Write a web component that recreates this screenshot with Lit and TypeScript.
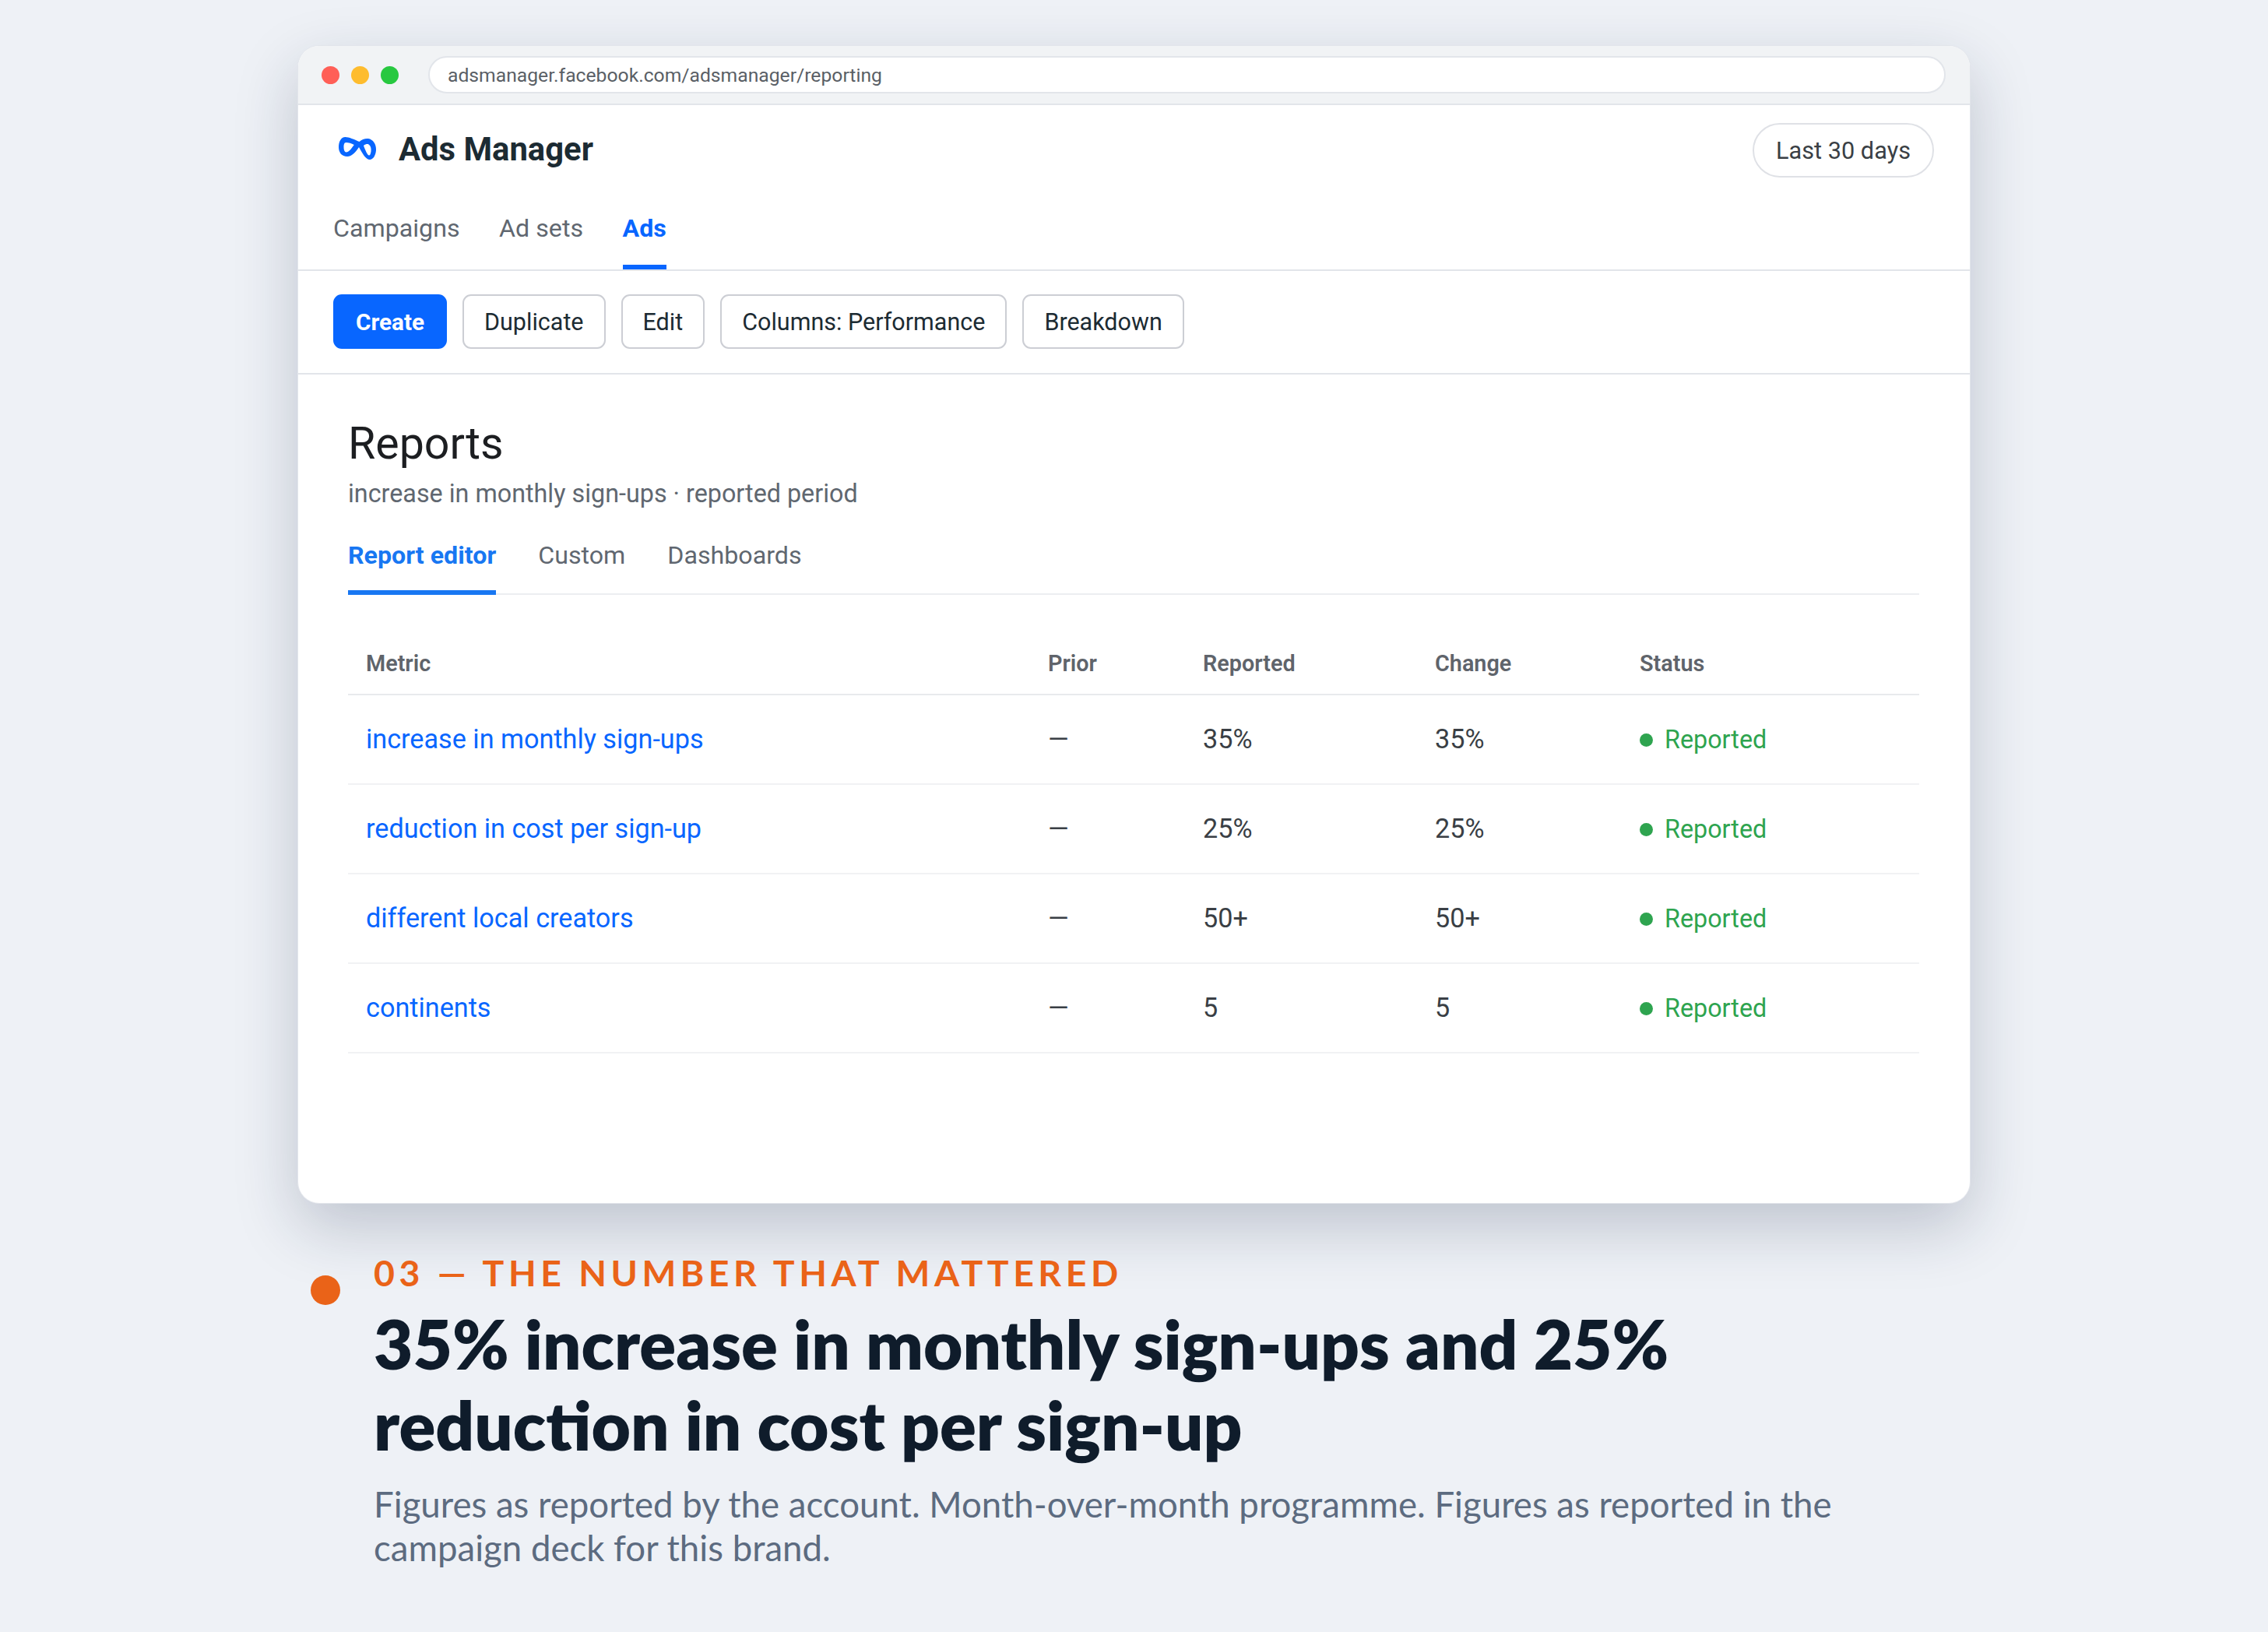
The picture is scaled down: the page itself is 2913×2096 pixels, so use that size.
import { LitElement, html, css } from 'lit';
import { customElement } from 'lit/decorators.js';

const rows = [
  { metric: 'increase in monthly sign-ups', reported: '35%', change: '35%' },
  { metric: 'reduction in cost per sign-up', reported: '25%', change: '25%' },
  { metric: 'different local creators', reported: '50+', change: '50+' },
  { metric: 'continents', reported: '5', change: '5' },
];

@customElement('app-root')
export class AppRoot extends LitElement {
  static styles = css`
    :host {
      display: block;
      min-height: 2096px;
      background: #eef1f6;
      font-family: Roboto, sans-serif;
      box-sizing: border-box;
      padding-top: 58px;
      overflow: hidden;
    }

    .window {
      box-sizing: border-box;
      width: 2149px;
      height: 1488px;
      margin-left: 382px;
      background: #fff;
      border-radius: 28px;
      border: 1px solid #e2e5eb;
      box-shadow: 0 30px 80px rgba(24, 36, 70, 0.22);
      overflow: hidden;
    }

    .chrome {
      box-sizing: border-box;
      height: 76px;
      display: flex;
      align-items: center;
      padding: 0 31px 0 30px;
      background: #f1f3f5;
      border-bottom: 2px solid #e2e5ea;
    }

    .dots {
      display: flex;
      gap: 15px;
      margin-right: 38px;
    }

    .dots span {
      width: 23px;
      height: 23px;
      border-radius: 50%;
    }

    .url {
      box-sizing: border-box;
      flex: 1;
      height: 48px;
      display: flex;
      align-items: center;
      padding: 0 23px;
      background: #fff;
      border: 2px solid #e2e5ea;
      border-radius: 24px;
      font-size: 24.7px;
      color: #5a5f66;
    }

    .head {
      box-sizing: border-box;
      height: 213px;
      border-bottom: 2px solid #e2e5ea;
    }

    .head-top {
      display: flex;
      justify-content: space-between;
      align-items: flex-start;
      padding: 23px 46px 0 52px;
    }

    .brand {
      display: flex;
      align-items: center;
      gap: 28px;
      height: 66px;
    }

    .brand svg {
      width: 49px;
      height: 30px;
      display: block;
    }

    .brand-name {
      font-size: 41.8px;
      font-weight: 700;
      color: #1c2b33;
    }

    .range {
      box-sizing: border-box;
      height: 70px;
      display: flex;
      align-items: center;
      padding: 0 28px;
      border: 2px solid #dfe1e6;
      border-radius: 35px;
      font-size: 30.7px;
      color: #3a3f45;
    }

    .tabs {
      display: flex;
      gap: 50.5px;
      padding-left: 45px;
      margin-top: 32px;
    }

    .tab {
      box-sizing: border-box;
      height: 86px;
      padding-top: 14px;
      font-size: 32.2px;
      color: #606770;
      border-bottom: 6px solid transparent;
    }

    .tab.on {
      color: #0866ff;
      font-weight: 700;
      border-bottom-color: #0866ff;
    }

    .toolbar {
      box-sizing: border-box;
      height: 133px;
      display: flex;
      gap: 20px;
      padding: 30px 45px 0;
      border-bottom: 2px solid #e2e5ea;
    }

    .btn {
      box-sizing: border-box;
      height: 70px;
      display: flex;
      align-items: center;
      padding: 0 26px;
      background: #fff;
      border: 2px solid #ccced4;
      border-radius: 11px;
      font-size: 30.5px;
      color: #1c2b33;
    }

    .btn.primary {
      padding: 0 27px;
      background: #0866ff;
      border-color: #0866ff;
      color: #fff;
      font-size: 29.7px;
      font-weight: 700;
    }

    .content {
      padding: 54px 65px 0 64px;
    }

    h1 {
      margin: 0;
      font-size: 57.3px;
      line-height: 70px;
      font-weight: 400;
      color: #1c1e21;
    }

    .sub {
      margin-top: 7px;
      font-size: 32.3px;
      line-height: 44px;
      color: #606770;
    }

    .subtabs {
      display: flex;
      gap: 54px;
      margin-top: 26px;
      border-bottom: 2px solid #eceef1;
    }

    .subtab {
      box-sizing: border-box;
      height: 82px;
      padding-top: 12px;
      margin-bottom: -2px;
      font-size: 32.2px;
      color: #606770;
    }

    .subtab.on {
      color: #1877f2;
      font-weight: 700;
      border-bottom: 6px solid #1877f2;
    }

    .table {
      margin-top: 39px;
    }

    .row {
      box-sizing: border-box;
      display: grid;
      grid-template-columns: 876px 199px 298px 263px 1fr;
      align-items: center;
      height: 115px;
      padding-bottom: 2px;
      border-bottom: 2px solid #f1f2f4;
      font-size: 34.2px;
      color: #3a3f45;
    }

    .row > div {
      padding-left: 23px;
    }

    .row.header {
      height: 90px;
      padding: 9px 0 0;
      font-size: 28.8px;
      font-weight: 600;
      color: #5f646b;
      border-bottom-color: #e8eaed;
    }

    .metric {
      color: #0866ff;
    }

    .status {
      display: flex;
      align-items: center;
      gap: 15px;
      padding-top: 3px;
      font-size: 32.3px;
      color: #2ea44f;
    }

    .status i {
      width: 17px;
      height: 17px;
      border-radius: 50%;
      background: #2ea44f;
    }

    .caption {
      display: flex;
      margin: 60px 0 0 399px;
      width: 2020px;
      font-family: Lato, sans-serif;
    }

    .mark {
      flex: none;
      width: 38px;
      height: 38px;
      margin-top: 32px;
      margin-right: 43px;
      border-radius: 50%;
      background: #ea6318;
    }

    .eyebrow {
      font-size: 46.4px;
      line-height: 56px;
      font-weight: 700;
      letter-spacing: 0.119em;
      color: #ea6318;
    }

    h2 {
      margin: 12px 0 0;
      font-size: 87px;
      line-height: 104px;
      font-weight: 800;
      color: #0f1c2b;
    }

    .note {
      margin-top: 22px;
      font-size: 45.6px;
      line-height: 56px;
      color: #5c6b80;
    }
  `;

  render() {
    return html`
      <div class="window">
        <div class="chrome">
          <div class="dots">
            <span style="background:#ff5f57"></span>
            <span style="background:#febc2e"></span>
            <span style="background:#28c840"></span>
          </div>
          <div class="url">adsmanager.facebook.com/adsmanager/reporting</div>
        </div>
        <div class="head">
          <div class="head-top">
            <div class="brand">
              <svg viewBox="0 0 49 30" fill="#0866ff" fill-rule="evenodd">
                <path
                  d="M8.5 0C13 0 20 3 26.5 6 30 3 34 1.5 38 2c6 1 10.500 7 10 15-.5 7-4 12-8 12-5 0-9-7-14-16-4 6-9 12-15 12C4 25 0 20 0 13 0 6 3 0 8.5 0ZM9.500 7C7 7 6.500 10 6.500 13c0 3.500 1 6.500 3.300 6.500 3 0 6.500-4.500 10-9.500C16.500 8 12.500 7 9.500 7ZM32 11c2.500-2 5-2.500 6.500-1.500 2.500 1.500 3.500 5 3 9-.4 3-1.200 5-2.500 5-2 0-4.500-6-7-12.500Z"
                />
              </svg>
              <span class="brand-name">Ads Manager</span>
            </div>
            <div class="range">Last 30 days</div>
          </div>
          <div class="tabs">
            <div class="tab">Campaigns</div>
            <div class="tab">Ad sets</div>
            <div class="tab on">Ads</div>
          </div>
        </div>
        <div class="toolbar">
          <div class="btn primary">Create</div>
          <div class="btn">Duplicate</div>
          <div class="btn">Edit</div>
          <div class="btn">Columns: Performance</div>
          <div class="btn">Breakdown</div>
        </div>
        <div class="content">
          <h1>Reports</h1>
          <div class="sub">increase in monthly sign-ups · reported period</div>
          <div class="subtabs">
            <div class="subtab on">Report editor</div>
            <div class="subtab">Custom</div>
            <div class="subtab">Dashboards</div>
          </div>
          <div class="table">
            <div class="row header">
              <div>Metric</div>
              <div>Prior</div>
              <div>Reported</div>
              <div>Change</div>
              <div>Status</div>
            </div>
            ${rows.map(
              (r) => html`
                <div class="row">
                  <div class="metric">${r.metric}</div>
                  <div>—</div>
                  <div>${r.reported}</div>
                  <div>${r.change}</div>
                  <div class="status"><i></i>Reported</div>
                </div>
              `
            )}
          </div>
        </div>
      </div>
      <div class="caption">
        <div class="mark"></div>
        <div>
          <div class="eyebrow">03 — THE NUMBER THAT MATTERED</div>
          <h2>35% increase in monthly sign-ups and 25% reduction in cost per sign-up</h2>
          <div class="note">
            Figures as reported by the account. Month-over-month programme. Figures as reported in
            the campaign deck for this brand.
          </div>
        </div>
      </div>
    `;
  }
}
